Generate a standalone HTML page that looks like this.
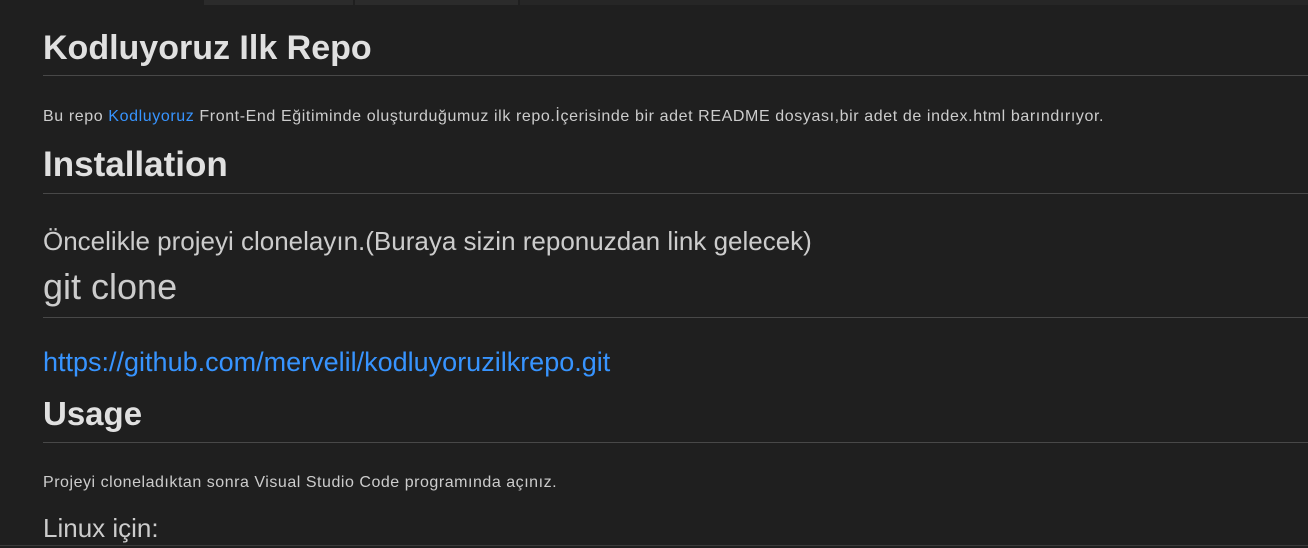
<!DOCTYPE html>
<html><head><meta charset="utf-8"><style>
html,body{margin:0;padding:0;width:1308px;height:548px;overflow:hidden;background:#1f1f1f;font-family:"Liberation Sans",sans-serif;color:#cccccc;position:relative}
.t{position:absolute;left:43px;white-space:nowrap;line-height:1}
.h{font-weight:bold;color:#e0e0e0}
.hr{position:absolute;left:43px;right:0;height:1px;background:#484848}
a{color:#3794ff;text-decoration:none}
.bar{position:absolute;top:0;height:5px}
</style></head><body>
<div class="bar" style="left:204px;width:149px;background:#2b2b2b"></div>
<div class="bar" style="left:355px;width:163px;background:#2b2b2b"></div>
<div class="bar" style="left:520px;width:788px;background:#262626"></div>

<div class="t h" style="top:31px;font-size:34px">Kodluyoruz Ilk Repo</div>
<div class="hr" style="top:75px"></div>
<div class="t" style="top:109px;font-size:16px;letter-spacing:0.6px">Bu repo <a>Kodluyoruz</a> Front-End Eğitiminde oluşturduğumuz ilk repo.İçerisinde bir adet README dosyası,bir adet de index.html barındırıyor.</div>
<div class="t h" style="top:147px;font-size:35px">Installation</div>
<div class="hr" style="top:193px"></div>
<div class="t" style="top:228px;font-size:26px">Öncelikle projeyi clonelayın.(Buraya sizin reponuzdan link gelecek)</div>
<div class="t" style="top:269px;font-size:36px">git clone</div>
<div class="hr" style="top:317px"></div>
<div class="t" style="top:349px;font-size:27px"><a>https://github.com/mervelil/kodluyoruzilkrepo.git</a></div>
<div class="t h" style="top:397px;font-size:33px">Usage</div>
<div class="hr" style="top:442px"></div>
<div class="t" style="top:475px;font-size:16px;letter-spacing:0.53px">Projeyi cloneladıktan sonra Visual Studio Code programında açınız.</div>
<div class="t" style="top:515px;font-size:26px">Linux için:</div>
<div class="hr" style="top:545px;left:0;background:#3a3a3a"></div>
</body></html>
